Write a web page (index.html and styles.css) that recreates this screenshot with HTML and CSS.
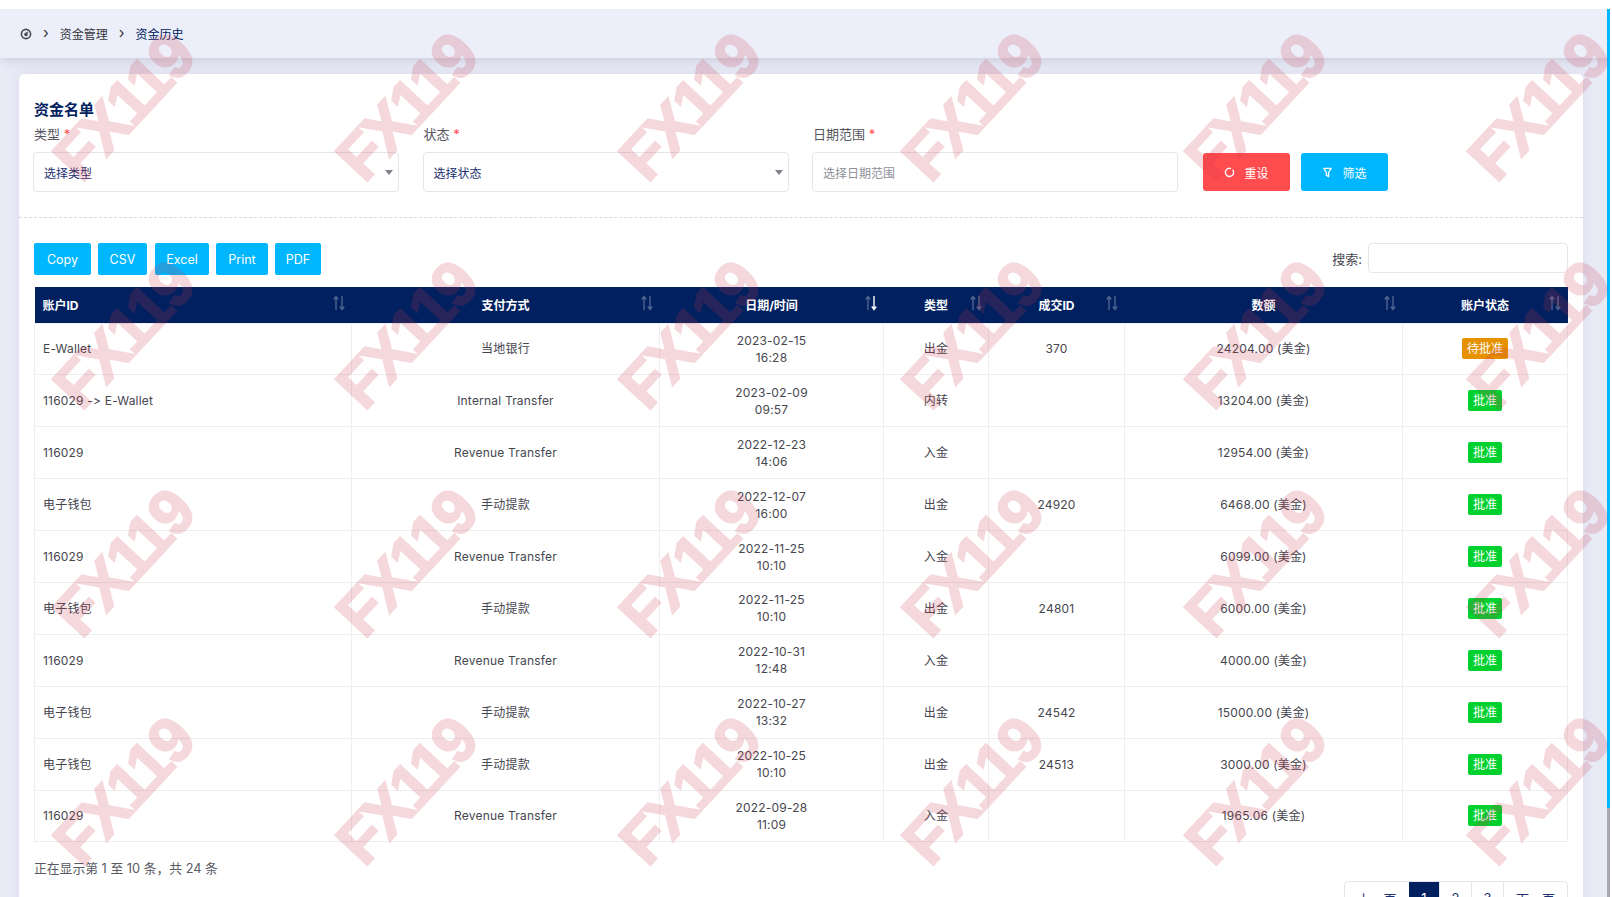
FILE: index.html
```html
<!DOCTYPE html>
<html lang="zh-CN">
<head>
    <meta charset="UTF-8">
    <meta name="viewport" content="width=device-width, initial-scale=1.0">
    <title>资金历史</title>
    <link rel="stylesheet" href="styles.css">
</head>
<body>
    <svg class="defs" width="0" height="0">
        <symbol id="sort-up" viewBox="0 0 6 16"><path d="M3 15V2M.8 4.5 3 1.5l2.2 3" fill="none" stroke="currentColor" stroke-width="1.4"/></symbol>
        <symbol id="sort-down" viewBox="0 0 6 16"><path d="M3 1v13M.8 11.5 3 14.5l2.2-3" fill="none" stroke="currentColor" stroke-width="1.4"/></symbol>
    </svg>

    <div class="top-strip"></div>
    <nav class="breadcrumb">
        <svg class="crumb-icon" viewBox="0 0 12 12"><circle cx="6" cy="6" r="4.6" fill="none" stroke="currentColor" stroke-width="1.6"/><circle cx="6" cy="6.4" r="1.8" fill="currentColor"/><path d="M6 6 8 3.6" stroke="currentColor" stroke-width="1.1"/></svg>
        <span class="crumb-sep">&rsaquo;</span>
        <span>资金管理</span>
        <span class="crumb-sep">&rsaquo;</span>
        <span class="crumb-current">资金历史</span>
    </nav>

    <main class="content">
        <section class="card">
            <div class="filters">
                <h2 class="card-title">资金名单</h2>
                <div class="filter-row">
                    <div class="field">
                        <label>类型 <em>*</em></label>
                        <div class="select">选择类型</div>
                    </div>
                    <div class="field">
                        <label>状态 <em>*</em></label>
                        <div class="select">选择状态</div>
                    </div>
                    <div class="field">
                        <label>日期范围 <em>*</em></label>
                        <div class="input placeholder">选择日期范围</div>
                    </div>
                    <button class="btn btn-reset">
                        <svg viewBox="0 0 12 12"><path d="M7.6 1.7A4.5 4.5 0 1 0 10.5 6 4.5 4.5 0 0 0 9.4 3" fill="none" stroke="currentColor" stroke-width="1.5"/></svg>
                        重设
                    </button>
                    <button class="btn btn-filter">
                        <svg viewBox="0 0 12 12"><path d="M2 1.5h8L7.2 6v4.5L4.8 9V6z" fill="none" stroke="currentColor" stroke-width="1.5" stroke-linejoin="round"/></svg>
                        筛选
                    </button>
                </div>
            </div>

            <div class="table-wrap">
                <div class="toolbar">
                    <div class="export-btns">
                        <button class="export">Copy</button>
                        <button class="export">CSV</button>
                        <button class="export">Excel</button>
                        <button class="export">Print</button>
                        <button class="export">PDF</button>
                    </div>
                    <div class="search">
                        <label>搜索:</label>
                        <div class="input"></div>
                    </div>
                </div>

                <table class="history">
                    <colgroup>
                        <col class="c-id"><col class="c-pay"><col class="c-date"><col class="c-type"><col class="c-deal"><col class="c-amount"><col class="c-status">
                    </colgroup>
                    <thead>
                        <tr>
                            <th class="left">账户ID<span class="sort"><svg><use href="#sort-up"/></svg><svg><use href="#sort-down"/></svg></span></th>
                            <th>支付方式<span class="sort"><svg><use href="#sort-up"/></svg><svg><use href="#sort-down"/></svg></span></th>
                            <th>日期/时间<span class="sort active"><svg><use href="#sort-up"/></svg><svg><use href="#sort-down"/></svg></span></th>
                            <th>类型<span class="sort"><svg><use href="#sort-up"/></svg><svg><use href="#sort-down"/></svg></span></th>
                            <th>成交ID<span class="sort"><svg><use href="#sort-up"/></svg><svg><use href="#sort-down"/></svg></span></th>
                            <th>数额<span class="sort"><svg><use href="#sort-up"/></svg><svg><use href="#sort-down"/></svg></span></th>
                            <th>账户状态<span class="sort"><svg><use href="#sort-up"/></svg><svg><use href="#sort-down"/></svg></span></th>
                        </tr>
                    </thead>
                    <tbody>
                        <tr><td class="left">E-Wallet</td><td>当地银行</td><td>2023-02-15<br>16:28</td><td>出金</td><td>370</td><td>24204.00 (美金)</td><td><span class="badge pending">待批准</span></td></tr>
                        <tr><td class="left">116029 -&gt; E-Wallet</td><td>Internal Transfer</td><td>2023-02-09<br>09:57</td><td>内转</td><td></td><td>13204.00 (美金)</td><td><span class="badge ok">批准</span></td></tr>
                        <tr><td class="left">116029</td><td>Revenue Transfer</td><td>2022-12-23<br>14:06</td><td>入金</td><td></td><td>12954.00 (美金)</td><td><span class="badge ok">批准</span></td></tr>
                        <tr><td class="left">电子钱包</td><td>手动提款</td><td>2022-12-07<br>16:00</td><td>出金</td><td>24920</td><td>6468.00 (美金)</td><td><span class="badge ok">批准</span></td></tr>
                        <tr><td class="left">116029</td><td>Revenue Transfer</td><td>2022-11-25<br>10:10</td><td>入金</td><td></td><td>6099.00 (美金)</td><td><span class="badge ok">批准</span></td></tr>
                        <tr><td class="left">电子钱包</td><td>手动提款</td><td>2022-11-25<br>10:10</td><td>出金</td><td>24801</td><td>6000.00 (美金)</td><td><span class="badge ok">批准</span></td></tr>
                        <tr><td class="left">116029</td><td>Revenue Transfer</td><td>2022-10-31<br>12:48</td><td>入金</td><td></td><td>4000.00 (美金)</td><td><span class="badge ok">批准</span></td></tr>
                        <tr><td class="left">电子钱包</td><td>手动提款</td><td>2022-10-27<br>13:32</td><td>出金</td><td>24542</td><td>15000.00 (美金)</td><td><span class="badge ok">批准</span></td></tr>
                        <tr><td class="left">电子钱包</td><td>手动提款</td><td>2022-10-25<br>10:10</td><td>出金</td><td>24513</td><td>3000.00 (美金)</td><td><span class="badge ok">批准</span></td></tr>
                        <tr><td class="left">116029</td><td>Revenue Transfer</td><td>2022-09-28<br>11:09</td><td>入金</td><td></td><td>1965.06 (美金)</td><td><span class="badge ok">批准</span></td></tr>
                    </tbody>
                </table>

                <div class="table-footer">
                    <div class="info">正在显示第 1 至 10 条，共 24 条</div>
                    <ul class="pager">
                        <li class="wide">上一页</li>
                        <li class="current">1</li>
                        <li>2</li>
                        <li>3</li>
                        <li class="wide">下一页</li>
                    </ul>
                </div>
            </div>
        </section>
    </main>

    <div class="scrollbar"><div class="thumb"></div></div>

    <!-- watermark laid over the whole page -->
    <div class="watermarks">
        <span>FX119</span><span>FX119</span><span>FX119</span><span>FX119</span><span>FX119</span><span>FX119</span>
        <span>FX119</span><span>FX119</span><span>FX119</span><span>FX119</span><span>FX119</span><span>FX119</span>
        <span>FX119</span><span>FX119</span><span>FX119</span><span>FX119</span><span>FX119</span><span>FX119</span>
        <span>FX119</span><span>FX119</span><span>FX119</span><span>FX119</span><span>FX119</span><span>FX119</span>
    </div>
</body>
</html>
```

FILE: styles.css
```css
:root {
    --navy: #00205f;
    --cyan: #00b6ff;
    --red: #ff4d4f;
    --green: #00d12f;
    --orange: #e59100;
    --text: #46464f;
    --line: #eeeef0;
    --border: #e6e6ea;
}

* {
    margin: 0;
    padding: 0;
    box-sizing: border-box;
    font-family: Inter, 'Noto Sans CJK SC', sans-serif;
    font-variant-ligatures: none;
    font-feature-settings: "calt" 0;
}

html, body {
    height: 897px;
    overflow: hidden;
}

body {
    position: relative;
    background-color: #e8eaf6;
    color: var(--text);
    font-size: 13px;
}

.defs {
    position: absolute;
}

.top-strip {
    position: relative;
    z-index: 1;
    height: 9px;
    background-color: #fff;
}

.breadcrumb {
    height: 49px;
    padding: 0 20px;
    display: flex;
    align-items: center;
    gap: 11px;
    background-color: #eceff9;
    box-shadow: 0 5px 10px -2px rgba(60, 60, 100, 0.16);
    font-size: 12px;
    color: #34343c;
    position: relative;
}

.crumb-icon {
    width: 12px;
    height: 12px;
    color: #4a4a50;
}

.crumb-sep {
    font-size: 15px;
    line-height: 1;
    margin-top: -2px;
}

.crumb-current {
    color: var(--navy);
}

.content {
    padding: 16px 29px 0 19px;
}

.card {
    background-color: #fff;
    border-radius: 5px;
    box-shadow: 0 0 12px rgba(60, 60, 100, 0.08);
}

.filters {
    padding: 26px 14px 25px;
    border-bottom: 1px dashed #d8d8dc;
}

.card-title {
    padding-left: 1px;
    font-size: 15px;
    line-height: 20px;
    font-weight: 700;
    color: var(--navy);
}

.filter-row {
    display: flex;
    align-items: flex-end;
    margin-top: 4px;
}

.field {
    width: 366px;
    margin-right: 23.5px;
}

.field:nth-child(3) {
    margin-right: 25px;
}

.field label {
    display: block;
    padding-left: 1px;
    font-size: 13px;
    line-height: 20px;
    margin-bottom: 8px;
    color: #55555f;
}

.field em {
    color: #ff4d4f;
    font-style: normal;
}

.select, .input {
    height: 40px;
    padding: 0 10px;
    display: flex;
    align-items: center;
    border: 1px solid var(--border);
    border-radius: 4px;
    background-color: #fff;
    font-size: 12px;
}

.select {
    position: relative;
    color: #1d2f6f;
}

.select::after {
    content: '';
    position: absolute;
    right: 5px;
    top: 17px;
    border-left: 4px solid transparent;
    border-right: 4px solid transparent;
    border-top: 5px solid #808088;
}

.placeholder {
    color: #8f8f98;
}

.btn {
    width: 87px;
    height: 38px;
    margin: 0 11px 1px 0;
    display: flex;
    align-items: center;
    justify-content: center;
    gap: 9px;
    border: none;
    border-radius: 3px;
    color: #fff;
    font-size: 12px;
}

.btn svg {
    width: 11px;
    height: 11px;
}

.btn-reset {
    background-color: var(--red);
}

.btn-filter {
    background-color: var(--cyan);
}

.table-wrap {
    padding: 25px 15px 0 15px;
}

.toolbar {
    display: flex;
    justify-content: space-between;
    align-items: flex-start;
    margin-bottom: 12px;
}

.export-btns {
    display: flex;
    gap: 7px;
}

.export {
    height: 32px;
    padding: 0;
    border: none;
    border-radius: 2px;
    background-color: var(--cyan);
    color: #fff;
    font-size: 12.5px;
}

.export:nth-child(1) { width: 57px; }
.export:nth-child(2) { width: 49px; }
.export:nth-child(3) { width: 54px; margin-left: 1px; }
.export:nth-child(4) { width: 52px; }
.export:nth-child(5) { width: 46px; }

.search {
    display: flex;
    align-items: center;
    gap: 6px;
    font-size: 13px;
}

.search .input {
    width: 200px;
    height: 30px;
}

.history {
    width: 1533px;
    table-layout: fixed;
    border-collapse: collapse;
    font-size: 12px;
    letter-spacing: 0.2px;
}

.c-id { width: 317px; }
.c-pay { width: 308px; }
.c-date { width: 224px; }
.c-type { width: 105px; }
.c-deal { width: 136px; }
.c-amount { width: 278px; }
.c-status { width: 165px; }

.history th {
    position: relative;
    height: 36px;
    background-color: var(--navy);
    color: #fff;
    font-size: 12px;
    font-weight: 700;
    letter-spacing: 0;
    text-align: center;
}

.history td {
    height: 51.9px;
    border: 1px solid var(--line);
    line-height: 17px;
    text-align: center;
    padding: 0 9px;
}

.history .left {
    text-align: left;
    padding-left: 8px;
}

.sort {
    position: absolute;
    right: 7px;
    top: 8px;
    display: flex;
    gap: 0;
    color: rgba(255, 255, 255, 0.3);
}

.sort svg {
    width: 6px;
    height: 16px;
    display: block;
}

.sort.active svg:last-child {
    color: #fff;
}

.badge {
    display: inline-block;
    padding: 2px 5px;
    border-radius: 2px;
    color: #fff;
    font-size: 12px;
    letter-spacing: 0;
    line-height: 17px;
}

.badge.ok {
    background-color: var(--green);
}

.badge.pending {
    background-color: var(--orange);
}

.table-footer {
    display: flex;
    justify-content: space-between;
    margin-top: 17px;
}

.info {
    line-height: 20px;
    font-size: 12.8px;
    color: #5a5a64;
}

.pager {
    display: flex;
    margin-top: 22px;
    list-style: none;
    border: 1px solid var(--border);
    border-radius: 4px;
    overflow: hidden;
    color: #1d2f6f;
    font-size: 13px;
}

.pager li {
    width: 32px;
    height: 32px;
    display: flex;
    align-items: center;
    justify-content: center;
    border-left: 1px solid var(--border);
}

.pager li:first-child {
    border-left: none;
}

.pager .wide {
    width: 64px;
}

.pager .current {
    width: 30px;
    background-color: var(--navy);
    color: #fff;
    border-left: none;
}

.scrollbar {
    position: absolute;
    top: 0;
    right: 0;
    width: 5px;
    height: 897px;
    background-color: #fff;
}

.thumb {
    width: 3px;
    height: 897px;
    background: linear-gradient(var(--cyan) 808px, #a6a8b0 808px);
}

.watermarks {
    position: absolute;
    top: 0;
    left: 0;
    width: 1612px;
    height: 897px;
    overflow: hidden;
    display: grid;
    grid-template-columns: repeat(6, 283px);
    grid-auto-rows: 228px;
    pointer-events: none;
}

.watermarks span {
    display: flex;
    align-items: center;
    justify-content: center;
    transform: translate(-18px, -7px) rotate(-47deg);
    font-family: 'Liberation Sans', sans-serif;
    font-size: 64px;
    font-weight: 700;
    letter-spacing: -3px;
    color: #cd374b;
    -webkit-text-stroke: 2px #cd374b;
    opacity: 0.19;
    white-space: nowrap;
}
```
